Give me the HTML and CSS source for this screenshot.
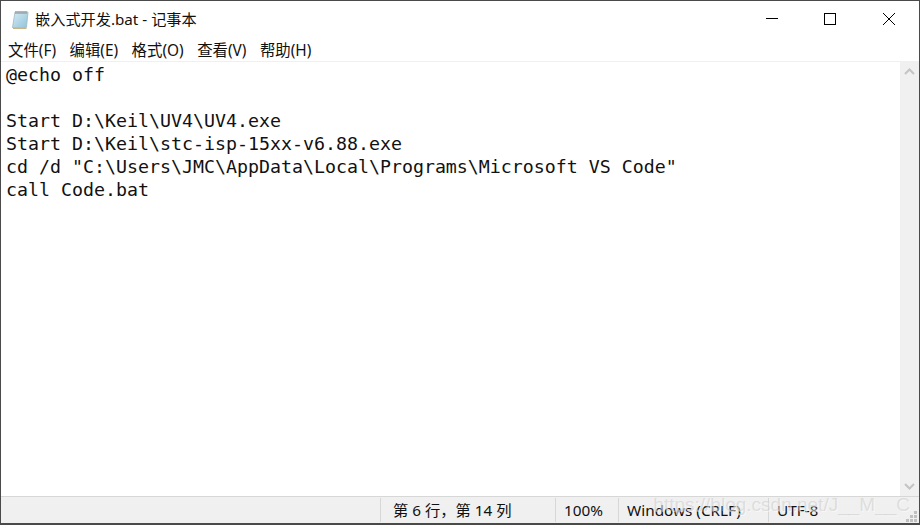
FILE: index.html
```html
<!DOCTYPE html>
<html lang="zh-CN">
<head>
<meta charset="utf-8">
<title>嵌入式开发.bat - 记事本</title>
<link rel="stylesheet" href="styles.css">
</head>
<body>
<div class="window">
  <header class="titlebar">
    <svg class="app-icon" width="20" height="22" viewBox="0 0 20 22">
      <defs><linearGradient id="pad" x1="0" y1="0" x2="1" y2="1"><stop offset="0" stop-color="#d6eaf3"/><stop offset="1" stop-color="#8fc3da"/></linearGradient></defs>
      <path d="M5 4 L18 4 L16.5 19.5 L2.5 19.5 Z" fill="url(#pad)" stroke="#9db6c2" stroke-width="0.8"/>
      <path d="M3 20 L16.5 20 L16.5 21 L3 21 Z" fill="#c9b48a"/>
      <path d="M6 3 V6 M8 3 V6 M10 3 V6 M12 3 V6 M14 3 V6 M16 3 V6" stroke="#8a8a8a" stroke-width="1"/>
    </svg>
    <span class="title">嵌入式开发.bat - 记事本</span>
    <div class="controls">
      <svg class="ctl" width="60" height="37" viewBox="0 0 60 37"><path d="M23 17.5 H35" stroke="#000" fill="none"/></svg>
      <svg class="ctl" width="58" height="37" viewBox="0 0 58 37"><rect x="21.5" y="12.5" width="11" height="11" stroke="#000" fill="none"/></svg>
      <svg class="ctl" width="58" height="37" viewBox="0 0 58 37"><path d="M22 12 L34 24 M34 12 L22 24" stroke="#000" fill="none"/></svg>
    </div>
  </header>
  <nav class="menubar">
    <span class="menu-item">文件(F)</span>
    <span class="menu-item">编辑(E)</span>
    <span class="menu-item">格式(O)</span>
    <span class="menu-item">查看(V)</span>
    <span class="menu-item">帮助(H)</span>
  </nav>
  <main class="body">
    <pre class="editor">@echo off

Start D:\Keil\UV4\UV4.exe
Start D:\Keil\stc-isp-15xx-v6.88.exe
cd /d "C:\Users\JMC\AppData\Local\Programs\Microsoft VS Code"
call Code.bat</pre>
    <div class="scrollbar">
      <svg width="19" height="17" viewBox="0 0 19 17"><path d="M5 12 L9.5 7.5 L14 12" stroke="#c4c4c4" stroke-width="2" fill="none"/></svg>
      <svg width="19" height="17" viewBox="0 0 19 17"><path d="M5 5 L9.5 9.5 L14 5" stroke="#c4c4c4" stroke-width="2" fill="none"/></svg>
    </div>
  </main>
  <footer class="statusbar">
    <span class="cell cell-pos">第 6 行，第 14 列</span>
    <span class="cell cell-zoom">100%</span>
    <span class="cell cell-eol">Windows (CRLF)</span>
    <span class="cell cell-enc">UTF-8</span>
    <svg class="grip" width="12" height="12" viewBox="0 0 12 12"><path d="M8 0h3v3h-3z M4 4h3v3h-3z M8 4h3v3h-3z M0 8h3v3h-3z M4 8h3v3h-3z M8 8h3v3h-3z" fill="#c0c0c0"/></svg>
  </footer>
  <div class="watermark">https://blog.csdn.net/J__M__C</div>
</div>
</body>
</html>
```
FILE: styles.css
```css
html, body { margin: 0; padding: 0; background: #fff; }
body { width: 920px; height: 525px; overflow: hidden; font-family: "Liberation Sans", "Noto Sans CJK SC", sans-serif; }
.window {
  position: relative;
  box-sizing: border-box;
  width: 920px;
  height: 525px;
  border: 1px solid #4a4a4a;
  border-width: 1px 1px 2px 1px;
  display: flex;
  flex-direction: column;
  background: #fff;
}
.titlebar { height: 37px; display: flex; align-items: center; flex: none; color: #111; }
.app-icon { margin-left: 9px; margin-top: -1px; flex: none; }
.title { margin-left: 5px; margin-top: -4px; font-size: 15.2px; font-family: "Noto Sans", "Noto Sans CJK SC", sans-serif; }
.controls { margin-left: auto; display: flex; }
.ctl { display: block; }
.menubar { height: 23px; display: flex; align-items: center; flex: none; padding-left: 7px; gap: 13.5px; font-size: 15.4px; font-family: "Noto Sans", "Noto Sans CJK SC", sans-serif; color: #111; }
.menu-item { white-space: nowrap; }
.body { flex: 1; min-height: 0; display: flex; border-top: 1px solid #f0f0f0; }
.editor {
  flex: 1;
  margin: 0;
  padding: 1px 0 0 5px;
  font-family: "DejaVu Sans Mono", monospace;
  font-size: 18.27px;
  line-height: 23px;
  color: #111;
  overflow: hidden;
}
.scrollbar { width: 19px; background: #f0f0f0; display: flex; flex-direction: column; justify-content: space-between; flex: none; }
.scrollbar svg { display: block; }
.statusbar {
  position: relative;
  height: 27px;
  flex: none;
  box-sizing: border-box;
  border-top: 1px solid #d7d7d7;
  background: #f0f0f0;
  display: flex;
  align-items: center;
  padding-left: 379px;
  font-size: 15.3px;
  font-family: "Noto Sans", "Noto Sans CJK SC", sans-serif;
  color: #111;
}
.cell { box-sizing: border-box; height: 24px; line-height: 24px; border-left: 1px solid #d7d7d7; padding-left: 12px; white-space: nowrap; flex: none; }
.cell-pos { width: 175px; }
.cell-zoom { width: 63px; padding-left: 8px; }
.cell-eol { width: 150px; padding-left: 8px; }
.cell-enc { width: 100px; padding-left: 8px; }
.grip { position: absolute; right: 1px; bottom: 0; }
.watermark { position: absolute; right: 9px; bottom: 7px; font-size: 19px; color: rgba(200,200,200,0.5); text-shadow: 1px 1px 0 rgba(255,255,255,0.5); white-space: nowrap; pointer-events: none; }
```
